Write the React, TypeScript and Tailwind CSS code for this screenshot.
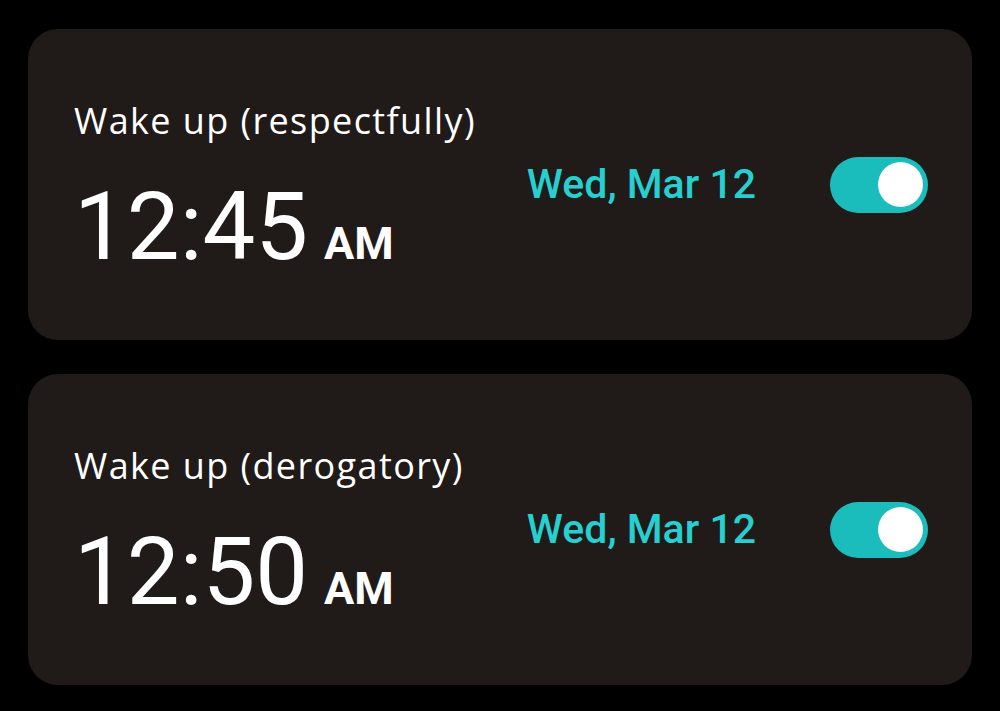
import React, { useState } from 'react';

type Alarm = {
  id: number;
  label: string;
  time: string;
  meridiem: string;
  date: string;
  enabled: boolean;
};

const initialAlarms: Alarm[] = [
  { id: 1, label: 'Wake up (respectfully)', time: '12:45', meridiem: 'AM', date: 'Wed, Mar 12', enabled: true },
  { id: 2, label: 'Wake up (derogatory)', time: '12:50', meridiem: 'AM', date: 'Wed, Mar 12', enabled: true },
];

const Toggle: React.FC<{ on: boolean; onChange: () => void }> = ({ on, onChange }) => (
  <button
    onClick={onChange}
    className={`flex h-[56px] w-[98px] items-center rounded-full px-[5px] ${on ? 'justify-end bg-[#1abcbc]' : 'justify-start bg-[#4a4543]'}`}
  >
    <span className="block h-[45px] w-[45px] rounded-full bg-white" />
  </button>
);

const App: React.FC = () => {
  const [alarms, setAlarms] = useState<Alarm[]>(initialAlarms);

  const toggle = (id: number) =>
    setAlarms(list => list.map(a => (a.id === id ? { ...a, enabled: !a.enabled } : a)));

  return (
    <div className="min-h-[711px] w-full bg-black px-[28px] pt-[29px] font-['Roboto',sans-serif]">
      <div className="flex flex-col gap-[34px]">
        {alarms.map(alarm => (
          <div key={alarm.id} className="flex h-[311px] items-center justify-between rounded-[30px] bg-[#201b19] pl-[46px] pr-[44px]">
            <div className="self-start pt-[74px]">
              <div className="font-['Open_Sans',sans-serif] text-[36px] leading-none tracking-[1.4px] text-white">{alarm.label}</div>
              <div className="mt-[41px] flex items-baseline">
                <span className="text-[94px] leading-none text-white">{alarm.time}</span>
                <span className="ml-[16px] text-[45px] font-bold leading-none text-white">{alarm.meridiem}</span>
              </div>
            </div>
            <div className="flex items-center gap-[74px]">
              <span className="text-[41px] font-medium leading-none text-[#26cfd0]">{alarm.date}</span>
              <Toggle on={alarm.enabled} onChange={() => toggle(alarm.id)} />
            </div>
          </div>
        ))}
      </div>
    </div>
  );
};

export default App;
